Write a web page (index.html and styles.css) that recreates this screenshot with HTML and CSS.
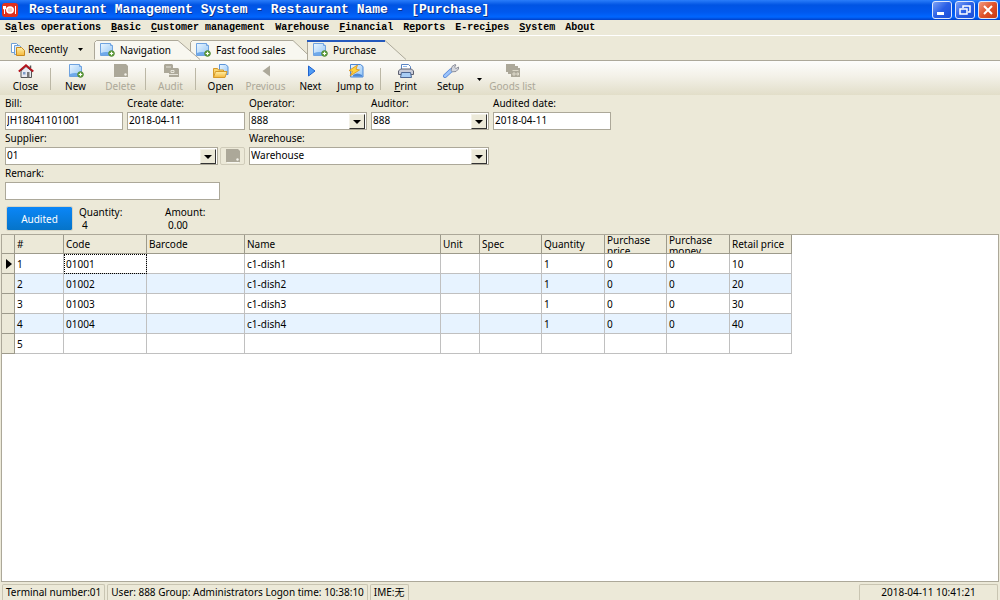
FILE: index.html
```html
<!DOCTYPE html>
<html lang="en">
<head>
    <meta charset="utf-8">
    <title>Restaurant Management System</title>
    <link rel="stylesheet" href="styles.css">
</head>
<body>
    <!-- shared icons -->
    <svg class="sprite" width="0" height="0">
        <defs>
            <linearGradient id="paper" x1="0" y1="0" x2="1" y2="1">
                <stop offset="0" stop-color="#eaf6ff"/>
                <stop offset="1" stop-color="#94c5f5"/>
            </linearGradient>
            <linearGradient id="folder" x1="0" y1="0" x2="0" y2="1">
                <stop offset="0" stop-color="#fff0a8"/>
                <stop offset="1" stop-color="#f5b83c"/>
            </linearGradient>
        </defs>
        <symbol id="icon-page" viewBox="0 0 16 14">
            <path d="M1.5 .5h10l2 2v10h-12z" fill="url(#paper)" stroke="#6fa3e0"/>
            <path d="M11.5 .5v2h2" fill="#fff" stroke="#6fa3e0"/>
            <path d="M2 10q5-2 11 0V12H2z" fill="#6fa9ea"/>
            <circle cx="12.5" cy="10.5" r="2.8" fill="#6aa644" stroke="#4a8530"/>
            <path d="M12.5 8.8v3.4M10.8 10.5h3.4" stroke="#fff"/>
        </symbol>
        <symbol id="icon-page-off" viewBox="0 0 16 14">
            <path d="M1 0h12l2 2v11H1z" fill="#aca899"/>
            <circle cx="12.5" cy="10.5" r="1.2" fill="#f4f2ea"/>
            <path d="M2 13.5h12" stroke="#fff" stroke-width=".6"/>
        </symbol>
    </svg>

    <header class="titlebar">
        <svg class="app-icon" width="16" height="14" viewBox="0 0 16 14">
            <rect width="16" height="14" rx="3" fill="#e0301e"/>
            <ellipse cx="8" cy="7" rx="4" ry="3.7" fill="#fff"/>
            <ellipse cx="8" cy="7" rx="2.5" ry="2.2" fill="#f6c9c2"/>
            <path d="M2.5 3v8M1.5 3v3h2V3M13.5 3v8" fill="none" stroke="#fff"/>
        </svg>
        <h1>Restaurant Management System - Restaurant Name - [Purchase]</h1>
        <div class="window-buttons">
            <button type="button" aria-label="Minimize">
                <svg width="18" height="16" viewBox="0 0 18 16"><path d="M4 11.5h7" stroke="#fff" stroke-width="3"/></svg>
            </button>
            <button type="button" aria-label="Restore">
                <svg width="18" height="16" viewBox="0 0 18 16"><path d="M7 6V4h7v6h-2" fill="none" stroke="#fff" stroke-width="1.5"/><path d="M4 7h7v5H4z" fill="none" stroke="#fff" stroke-width="1.5"/></svg>
            </button>
            <button type="button" class="close" aria-label="Close window">
                <svg width="18" height="16" viewBox="0 0 18 16"><path d="M5 4l8 8M13 4l-8 8" stroke="#fff" stroke-width="2"/></svg>
            </button>
        </div>
    </header>

    <nav class="menu">
        <button type="button">S<u>a</u>les operations</button>
        <button type="button"><u>B</u>asic</button>
        <button type="button"><u>C</u>ustomer management</button>
        <button type="button">Wa<u>r</u>ehouse</button>
        <button type="button"><u>F</u>inancial</button>
        <button type="button">R<u>e</u>ports</button>
        <button type="button">E-rec<u>i</u>pes</button>
        <button type="button"><u>S</u>ystem</button>
        <button type="button">Ab<u>o</u>ut</button>
    </nav>

    <div class="tabs">
        <button type="button" class="recent">
            <svg width="16" height="15" viewBox="0 0 16 15">
                <path d="M1.5 1.5h5l2 2v7h-7z" fill="#fff" stroke="#6fa0d8"/>
                <path d="M4.5 3.5h5l2 2v7h-7z" fill="#d6eaff" stroke="#6fa0d8"/>
                <path d="M6.5 5.5h5l3 3v5h-8z" fill="url(#folder)" stroke="#c98a1e"/>
            </svg>
            <span>Recently</span>
            <svg width="5" height="3" viewBox="0 0 5 3"><path d="M0 0h5L2.5 3z"/></svg>
        </button>
        <button type="button" class="tab tab-nav">
            <svg class="shape" width="107" height="20" viewBox="0 0 107 20">
                <path d="M.5 19.5V2.5l2-2H84L106 19.5" fill="#f8f7f0" stroke="#aca899"/>
            </svg>
            <svg class="icon" width="16" height="14"><use href="#icon-page"/></svg>
            <span>Navigation</span>
        </button>
        <button type="button" class="tab tab-sales">
            <svg class="shape" width="124" height="20" viewBox="0 0 124 20">
                <path d="M.5 19.5V2.5l2-2H103L123 19.5" fill="#f8f7f0" stroke="#aca899"/>
            </svg>
            <svg class="icon" width="16" height="14"><use href="#icon-page"/></svg>
            <span>Fast food sales</span>
        </button>
        <button type="button" class="tab tab-purchase">
            <svg class="shape" width="100" height="20" viewBox="0 0 100 20">
                <path d="M.5 20V.5H78L99 19.5V20z" fill="#f1efe4"/>
                <path d="M.5 20V.5M78 .5L99 19.5" fill="none" stroke="#aca899"/>
                <path d="M0 1h78" stroke="#2459bd" stroke-width="2"/>
            </svg>
            <svg class="icon" width="16" height="14"><use href="#icon-page"/></svg>
            <span>Purchase</span>
        </button>
    </div>

    <div class="toolbar">
        <button type="button">
            <svg width="16" height="14" viewBox="0 0 16 14">
                <path d="M3 7v6.5h10.5V7L8 2.5z" fill="#e8e8f0" stroke="#555"/>
                <path d="M5 8h2.5v2.5H5z" fill="#7c9cc8"/><path d="M9 8h2.5v5.5H9z" fill="#777"/>
                <path d="M.8 7.5L8 1.2l7.3 6.3" fill="none" stroke="#b5121b" stroke-width="1.8"/>
                <path d="M12.5 1.5V4" stroke="#555" stroke-width="1.5"/>
            </svg>
            <span>Close</span>
        </button>
        <i class="sep"></i>
        <button type="button"><svg width="16" height="14"><use href="#icon-page"/></svg><span>New</span></button>
        <button type="button" disabled><svg width="16" height="14"><use href="#icon-page-off"/></svg><span>Delete</span></button>
        <i class="sep"></i>
        <button type="button" disabled>
            <svg width="16" height="14" viewBox="0 0 16 14">
                <path d="M1 1l1-1h7l1 1v3h5l1 1v8H6V9H1z" fill="#aca899"/>
                <path d="M3 3h5M8 6.5h3v2H8zM6 10.5h9" fill="none" stroke="#f4f2ea" stroke-width=".8"/>
            </svg>
            <span>Audit</span>
        </button>
        <i class="sep"></i>
        <button type="button">
            <svg width="16" height="14" viewBox="0 0 16 14">
                <path d="M6.5 .5h6l2.5 2v8H6.5z" fill="url(#paper)" stroke="#5b94da"/>
                <path d="M.5 13.5V4.5h4l1 1.5h5v2" fill="#fbd66f" stroke="#d59a2a"/>
                <path d="M.5 13.5L2.5 7.5H14l-2 6z" fill="url(#folder)" stroke="#d59a2a"/>
            </svg>
            <span>Open</span>
        </button>
        <button type="button" disabled>
            <svg width="16" height="14" viewBox="0 0 16 14"><path d="M12 1.5v11L4.5 7z" fill="#aca899"/></svg>
            <span>Previous</span>
        </button>
        <button type="button">
            <svg width="16" height="14" viewBox="0 0 16 14"><path d="M5.5 2v10L12 7z" fill="#4f9bf5" stroke="#1f63cf"/></svg>
            <span>Next</span>
        </button>
        <button type="button">
            <svg width="16" height="14" viewBox="0 0 16 14">
                <path d="M2.5 .5h10l2.5 2v10.5H2.5z" fill="url(#paper)" stroke="#4a87d6"/>
                <path d="M5 11q4-3 9 0v1.5H5z" fill="#4a87d6"/>
                <path d="M9.5 1L1 6.5l3.5 1L2 12l9.5-6-3.5-.8z" fill="#ffd23c" stroke="#d8921a" stroke-width=".8"/>
            </svg>
            <span>Jump to</span>
        </button>
        <i class="sep"></i>
        <button type="button">
            <svg width="16" height="14" viewBox="0 0 16 14">
                <path d="M3.5 5V.5h7l2 2V5" fill="#fff" stroke="#5b86c4"/>
                <path d="M.5 10.5V7l2-2h11l2 2v3.5z" fill="#c9ccd8" stroke="#5d6070"/>
                <path d="M3.5 8.5h9l1 5h-11z" fill="#a8cdf5" stroke="#4d6794"/>
                <path d="M5 2.5h4" stroke="#8fb8ea"/>
            </svg>
            <span><u>P</u>rint</span>
        </button>
        <button type="button">
            <svg width="16" height="14" viewBox="0 0 16 14">
                <path d="M2 12l6.5-6" stroke="#5585d6" stroke-width="4" stroke-linecap="round"/>
                <path d="M2 12l6.5-6" stroke="#9cc4fa" stroke-width="2.5" stroke-linecap="round"/>
                <path d="M8 6.5L9 2.5 12 .5l1 .5-1.5 2.2 1.5 1.3L15.5 3v2L13 7.5l-3.5.3z" fill="#d5d7de" stroke="#777b88" stroke-width=".8"/>
            </svg>
            <span>Setup</span>
        </button>
        <button type="button" class="drop" aria-label="Setup options">
            <svg width="5" height="3" viewBox="0 0 5 3"><path d="M0 0h5L2.5 3z"/></svg>
        </button>
        <button type="button" class="wide" disabled>
            <svg width="16" height="14" viewBox="0 0 16 14">
                <path d="M1 0h9v2h3v2h2v9H6v-3H3V8H1z" fill="#aca899"/>
                <path d="M7.5 6.5h6M8 9h2v2H8zM12 9h1.5v2H12z" fill="none" stroke="#e8e5d6" stroke-width=".8"/>
            </svg>
            <span>Goods list</span>
        </button>
    </div>

    <main>
        <form class="bill">
            <div class="field">
                <label for="bill">Bill:</label>
                <input type="text" id="bill" value="JH18041101001">
            </div>
            <div class="field">
                <label for="created">Create date:</label>
                <input type="text" id="created" value="2018-04-11">
            </div>
            <div class="field">
                <label for="operator">Operator:</label>
                <div class="combo">
                    <select id="operator"><option>888</option></select>
                    <span class="arrow"></span>
                </div>
            </div>
            <div class="field">
                <label for="auditor">Auditor:</label>
                <div class="combo">
                    <select id="auditor"><option>888</option></select>
                    <span class="arrow"></span>
                </div>
            </div>
            <div class="field">
                <label for="auditDate">Audited date:</label>
                <input type="text" id="auditDate" value="2018-04-11">
            </div>
            <div class="field double">
                <label for="supplier">Supplier:</label>
                <div class="with-button">
                    <div class="combo">
                        <select id="supplier"><option>01</option></select>
                        <span class="arrow"></span>
                    </div>
                    <button type="button" disabled aria-label="Edit supplier"><svg width="16" height="14"><use href="#icon-page-off"/></svg></button>
                </div>
            </div>
            <div class="field rest">
                <label for="warehouse">Warehouse:</label>
                <div class="combo">
                    <select id="warehouse"><option>Warehouse</option></select>
                    <span class="arrow"></span>
                </div>
            </div>
            <div class="field double remark">
                <label for="remark">Remark:</label>
                <input type="text" id="remark">
            </div>
        </form>

        <div class="summary">
            <button type="button" class="audited">Audited</button>
            <dl>
                <dt>Quantity:</dt>
                <dd>4</dd>
            </dl>
            <dl>
                <dt>Amount:</dt>
                <dd>0.00</dd>
            </dl>
        </div>

        <div class="grid">
            <table>
                <colgroup>
                    <col class="c-mark"><col class="c-no"><col class="c-code"><col class="c-barcode"><col class="c-name">
                    <col class="c-unit"><col class="c-spec"><col class="c-quantity"><col class="c-price"><col class="c-money"><col class="c-retail">
                </colgroup>
                <thead>
                    <tr>
                        <th></th><th>#</th><th>Code</th><th>Barcode</th><th>Name</th><th>Unit</th><th>Spec</th><th>Quantity</th>
                        <th><div class="clip">Purchase price</div></th><th><div class="clip">Purchase money</div></th><th>Retail price</th>
                    </tr>
                </thead>
                <tbody>
                    <tr><th><svg width="6" height="10" viewBox="0 0 6 10"><path d="M0 0l6 5-6 5z"/></svg></th><td>1</td><td class="focus">01001</td><td></td><td>c1-dish1</td><td></td><td></td><td>1</td><td>0</td><td>0</td><td>10</td></tr>
                    <tr><th></th><td>2</td><td>01002</td><td></td><td>c1-dish2</td><td></td><td></td><td>1</td><td>0</td><td>0</td><td>20</td></tr>
                    <tr><th></th><td>3</td><td>01003</td><td></td><td>c1-dish3</td><td></td><td></td><td>1</td><td>0</td><td>0</td><td>30</td></tr>
                    <tr><th></th><td>4</td><td>01004</td><td></td><td>c1-dish4</td><td></td><td></td><td>1</td><td>0</td><td>0</td><td>40</td></tr>
                    <tr><th></th><td>5</td><td></td><td></td><td></td><td></td><td></td><td></td><td></td><td></td><td></td></tr>
                </tbody>
            </table>
        </div>
    </main>

    <footer class="status">
        <span>Terminal number:01</span>
        <span>User: 888 Group: Administrators Logon time: 10:38:10</span>
        <span>IME:无</span>
        <span class="clock">2018-04-11 10:41:21</span>
    </footer>
</body>
</html>
```

FILE: styles.css
```css
* {
    box-sizing: border-box;
}
body {
    margin: 0;
    height: 100vh;
    display: flex;
    flex-direction: column;
    overflow: hidden;
    background-color: #ece9d8;
    color: #000;
    font-family: "Noto Sans", "Noto Sans CJK SC", sans-serif;
    font-size: 10px;
    line-height: 12px;
}
button,
input,
select {
    font: inherit;
    color: inherit;
    margin: 0;
    padding: 0;
    border: none;
    background: none;
}
button {
    white-space: nowrap;
}
.sprite {
    position: absolute;
}

/* title bar */
.titlebar {
    display: flex;
    align-items: center;
    height: 20px;
    padding: 0 2px;
    background: linear-gradient(#2a7dfa, #0054e3 25%, #0058ee 60%, #0066ff 85%, #0040c8);
}
.titlebar h1 {
    flex: 1;
    margin: 0 0 0 11px;
    color: #fff;
    font: bold 13px/16px "Liberation Mono", monospace;
    text-shadow: 1px 1px #0a318c;
}
.window-buttons {
    display: flex;
    gap: 3px;
}
.window-buttons button {
    width: 20px;
    height: 18px;
    border: 1px solid #dfe8fb;
    border-radius: 3px;
    background: linear-gradient(135deg, #7ea2f5, #2a5fe6 50%, #1c4fd8);
}
.window-buttons .close {
    background: linear-gradient(135deg, #f09a80, #e0532c 50%, #c93a12);
}
.window-buttons svg {
    display: block;
}

/* menu */
.menu {
    display: flex;
    gap: 10px;
    height: 16px;
    padding: 1px 0 0 5px;
    border-bottom: 1px solid #fff;
}
.menu button {
    font: bold 10px/14px "Liberation Mono", monospace;
}

/* tabs */
.tabs {
    display: flex;
    align-items: flex-end;
    height: 25px;
    border-bottom: 1px solid #aca899;
}
.recent {
    display: flex;
    align-items: center;
    height: 20px;
    width: 84px;
    margin: 0 0 1px 10px;
}
.recent span {
    width: 50px;
    margin-left: 2px;
    text-align: left;
}
.tab {
    position: relative;
    display: flex;
    align-items: center;
    height: 20px;
    padding-left: 5px;
    gap: 5px;
}
.tab .shape {
    position: absolute;
    left: 0;
    top: 0;
}
.tab .icon,
.tab span {
    position: relative;
}
.tab-nav {
    width: 106px;
    margin-right: -10px;
    z-index: 1;
}
.tab-sales {
    width: 123px;
    margin-right: -6px;
}
.tab-purchase {
    width: 100px;
    z-index: 2;
}

/* toolbar */
.toolbar {
    display: flex;
    height: 34px;
    padding: 3px 3px 0;
    background: linear-gradient(#fdfdfb, #f3f1e8 45%, #e2dec9);
}
.toolbar button {
    display: flex;
    flex-direction: column;
    align-items: center;
    gap: 2px;
    width: 45px;
}
.toolbar button:disabled {
    color: #aca899;
}
.toolbar .drop {
    justify-content: center;
    width: 12px;
}
.toolbar .wide {
    width: 55px;
}
.sep {
    width: 1px;
    height: 22px;
    margin: 4px 2px 0;
    background-color: #bbb7a5;
}

/* form */
main {
    flex: 1;
    display: flex;
    flex-direction: column;
    min-height: 0;
    padding: 0 1px;
}
.bill {
    display: grid;
    grid-template-columns: repeat(5, 118px);
    gap: 2px 4px;
    padding: 2px 4px 0;
}
.field {
    display: flex;
    flex-direction: column;
    gap: 3px;
}
.double {
    grid-column: span 2;
}
.rest {
    grid-column: 3 / span 3;
}
.rest .combo {
    width: 240px;
}
.remark input {
    width: 215px;
}
input,
.combo {
    height: 18px;
    border: 1px solid #aca899;
    background-color: #fff;
}
input {
    width: 100%;
    padding: 0 0 2px 1px;
}
.combo {
    position: relative;
    flex: 1 0 auto;
}
select {
    display: block;
    appearance: none;
    width: 100%;
    height: 14px;
    padding-left: 1px;
}
.arrow {
    position: absolute;
    top: 1px;
    right: 1px;
    bottom: 0;
    width: 16px;
    display: flex;
    align-items: center;
    justify-content: center;
    border: 1px solid;
    border-color: #f4f2e8 #333 #333 #f4f2e8;
    background-color: #ece9d8;
    pointer-events: none;
}
.arrow::after {
    content: "";
    border: 4px solid transparent;
    border-top: 4px solid #000;
    border-bottom: none;
}
.with-button {
    display: flex;
    gap: 2px;
    height: 18px;
}
.with-button button {
    width: 25px;
    border: 1px solid #d0ccba;
    border-radius: 2px;
    line-height: 0;
}

/* totals */
.summary {
    display: flex;
    height: 34px;
    padding: 6px 5px 0;
}
.audited {
    width: 67px;
    height: 25px;
    border: 1px solid #d8d4c2;
    border-radius: 2px;
    background: linear-gradient(#0a86f8, #0674c8) padding-box;
    color: #fff;
}
.summary dl {
    width: 86px;
    margin: 0 0 0 6px;
}
.summary dl + dl {
    margin-left: 0;
}
.summary dd {
    margin: 1px 0 0 3px;
}

/* goods table */
.grid {
    flex: 1;
    min-height: 0;
    border: 1px solid #aca899;
    background-color: #fff;
}
table {
    table-layout: fixed;
    width: 790px;
    border-collapse: separate;
    border-spacing: 0;
}
.c-mark { width: 13px; }
.c-no { width: 49px; }
.c-code { width: 83px; }
.c-barcode { width: 98px; }
.c-name { width: 196px; }
.c-unit { width: 39px; }
.c-spec { width: 62px; }
.c-quantity { width: 63px; }
.c-price { width: 62px; }
.c-money { width: 63px; }
.c-retail { width: 62px; }
th,
td {
    height: 20px;
    padding: 0 0 0 2px;
    border-right: 1px solid #c0c0c0;
    border-bottom: 1px solid #c0c0c0;
    font-weight: normal;
    text-align: left;
}
thead th {
    height: 19px;
}
th {
    background-color: #ece9d8;
    border-color: #9d9a8b;
}
tbody th {
    padding-left: 4px;
    line-height: 0;
}
tbody tr:nth-child(even) td {
    background-color: #e7f3ff;
}
/* long headings show only the top of their second line */
.clip {
    height: 18px;
    line-height: 11px;
    overflow: hidden;
}
.focus {
    outline: 1px dotted #000;
    outline-offset: -1px;
}

/* status bar */
.status {
    display: flex;
    gap: 2px;
    height: 18px;
    padding: 2px 2px 0;
}
.status span {
    padding: 1px 3px 0;
    border: 1px solid #c9c5b2;
    border-bottom: none;
    border-radius: 2px 2px 0 0;
    white-space: nowrap;
}
.status .clock {
    width: 139px;
    margin-left: auto;
    text-align: center;
}
```
